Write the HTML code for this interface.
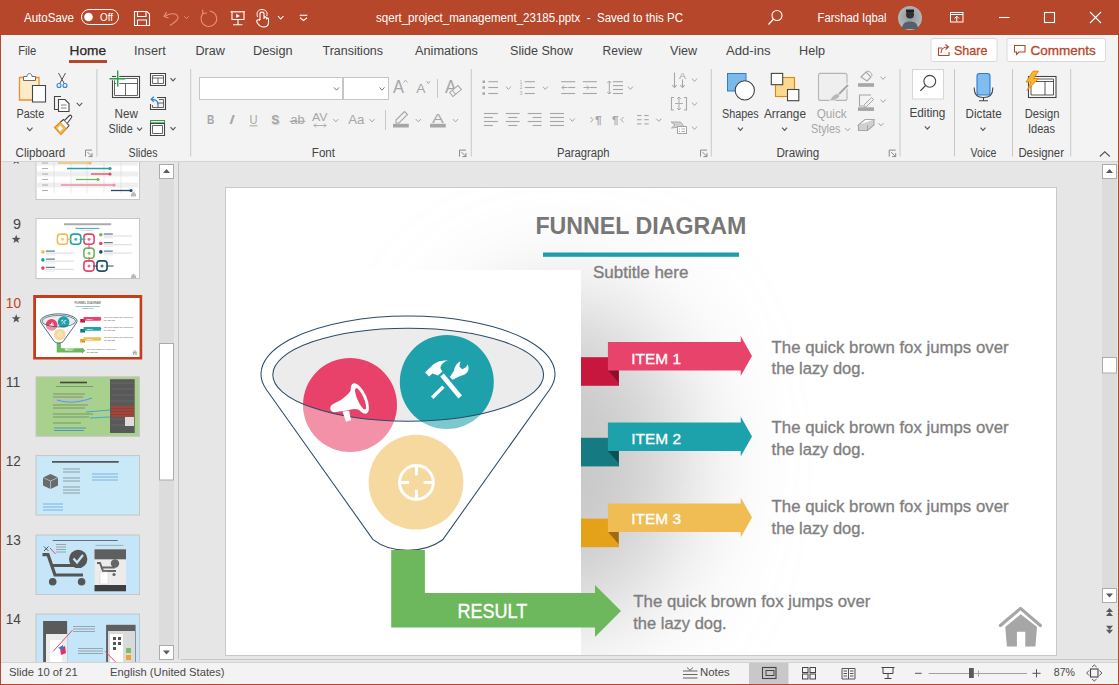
<!DOCTYPE html><html><head><meta charset="utf-8"><style>
html,body{margin:0;padding:0;background:#E6E6E6;overflow:hidden;width:1119px;height:685px;}
svg{display:block;font-family:"Liberation Sans",sans-serif;}
</style></head><body>
<svg width="1119" height="685" viewBox="0 0 1119 685">
<rect x="0" y="0" width="1119" height="685" fill="#E6E6E6" />
<rect x="0" y="0" width="1119" height="35" fill="#B7472A" />
<rect x="1" y="35" width="1117" height="126" fill="#F3F3F3" />
<line x1="1" y1="161.5" x2="1118" y2="161.5" stroke="#D4D4D4" stroke-width="1" />
<rect x="0" y="35" width="1" height="650" fill="#B7472A" />
<rect x="1118" y="35" width="1" height="650" fill="#B7472A" />
<rect x="0" y="684" width="1119" height="1" fill="#B7472A" />
<text x="24.00" y="21.70" font-size="12" fill="#FFFFFF" font-weight="normal" textLength="50.01" lengthAdjust="spacingAndGlyphs" >AutoSave</text>
<rect x="81.5" y="9.5" width="37" height="15" rx="7.5" fill="none" stroke="#fff" stroke-width="1"/>
<circle cx="88.5" cy="17" r="4.3" fill="#fff"/>
<text x="100.00" y="21.00" font-size="11" fill="#FFFFFF" font-weight="normal" textLength="12.97" lengthAdjust="spacingAndGlyphs" >Off</text>
<path d="M134.5,11.5 H147 L149.5,14 V25.5 H134.5 Z" fill="none" stroke="#FFFFFF" stroke-width="1.1" />
<path d="M137.5,11.5 V16.5 H146 V11.5" fill="none" stroke="#FFFFFF" stroke-width="1.1" />
<path d="M137.5,25.5 V20 H146.5 V25.5" fill="none" stroke="#FFFFFF" stroke-width="1.1" />
<path d="M166.5,12 L164,16.5 L168.5,18" fill="none" stroke="#E6907A" stroke-width="1.1" />
<path d="M164.5,16.5 C169,13 177.5,12.5 178,17.5 C178.3,20 174,23 170,25.5" fill="none" stroke="#E6907A" stroke-width="1.1" />
<path d="M184.25,16.3 L186.5,18.7 L188.75,16.3" fill="none" stroke="#E6907A" stroke-width="1" />
<path d="M203.5,13 C199.5,17 200.5,24.5 207,26.2 C213,27.5 217.5,22.5 216.5,17.5 C216,14 213,11.5 209.5,11" fill="none" stroke="#E6907A" stroke-width="1.1" />
<path d="M202.5,9.5 L203,13.5 L207,13" fill="none" stroke="#E6907A" stroke-width="1.1" />
<path d="M230.5,11.8 H245" fill="none" stroke="#FFFFFF" stroke-width="1.2" />
<path d="M232,11.8 V19.5 H244 V11.8" fill="none" stroke="#FFFFFF" stroke-width="1.1" />
<path d="M238,19.5 V24.8 M233,24.8 H242.5" fill="none" stroke="#FFFFFF" stroke-width="1.1" />
<path d="M236.2,13.8 L240,15.9 L236.2,18 Z" fill="#FFFFFF" stroke="none" stroke-width="1" />
<path d="M260,20 V14 C260,11.5 264,11.5 264,14 V19 M264,18 C264,16.5 266.5,16.5 266.5,18 V19.5 M266.5,19 C266.5,17.8 268.5,17.8 268.5,19 V22.5 C268.5,25.5 266.5,27 263.5,27 C260.5,27 258.5,25 257,22.5 L256.8,20.5 C257.5,19.5 259,19.5 260,20.5" fill="none" stroke="#FFFFFF" stroke-width="1.1" />
<path d="M257.5,17 C256,12 258.5,9.5 262,9.5 C265.5,9.5 268,12 266.8,16" fill="none" stroke="#FFFFFF" stroke-width="1" />
<path d="M277.95,16.0 L280.7,19.0 L283.45,16.0" fill="none" stroke="#FFFFFF" stroke-width="1.1" />
<path d="M299.7,15.3 H307.3" fill="none" stroke="#FFFFFF" stroke-width="1.1" />
<path d="M300,17.8 L303.5,20.5 L307,17.8" fill="none" stroke="#FFFFFF" stroke-width="1.1" />
<text x="376.00" y="21.80" font-size="12" fill="#FFFFFF" font-weight="normal" textLength="307.00" lengthAdjust="spacingAndGlyphs" xml:space="preserve">sqert_project_management_23185.pptx  -  Saved to this PC</text>
<circle cx="777" cy="15.5" r="5" fill="none" stroke="#fff" stroke-width="1.1"/>
<path d="M773.5,19 L768.5,24.5" fill="none" stroke="#FFFFFF" stroke-width="1.2" />
<text x="817.60" y="22.40" font-size="12" fill="#FFFFFF" font-weight="normal" textLength="69.00" lengthAdjust="spacingAndGlyphs" >Farshad Iqbal</text>
<defs><radialGradient id="av" cx="50%" cy="45%" r="55%"><stop offset="0" stop-color="#8d969c"/><stop offset="1" stop-color="#b5babd"/></radialGradient></defs>
<circle cx="910" cy="18" r="12" fill="url(#av)"/>
<path d="M902,29 C902.5,22.5 906,21.5 910,21.5 C914,21.5 917.5,22.5 918,29 Z" fill="#55606b" stroke="none" stroke-width="1" />
<circle cx="910" cy="14.5" r="4" fill="#2f2f33"/>
<rect x="906" y="9.5" width="8" height="2.5" fill="#1e1e22" />
<rect x="950.5" y="12.5" width="12.5" height="9.5" fill="none" stroke="#fff" stroke-width="1"/>
<path d="M950.5,14.5 H963 M956.75,21.5 V16.5 M954.5,18.5 L956.75,16.2 L959,18.5" fill="none" stroke="#FFFFFF" stroke-width="1" />
<path d="M999,17.5 H1009.5" fill="none" stroke="#FFFFFF" stroke-width="1.1" />
<rect x="1044.5" y="12.5" width="10" height="10" fill="none" stroke="#fff" stroke-width="1.1"/>
<path d="M1090,12 L1101,23 M1101,12 L1090,23" fill="none" stroke="#FFFFFF" stroke-width="1.1" />
<text x="18.20" y="55.00" font-size="12.5" fill="#444444" font-weight="normal" textLength="18.10" lengthAdjust="spacingAndGlyphs" >File</text>
<text x="134.00" y="55.00" font-size="12.5" fill="#444444" font-weight="normal" textLength="31.80" lengthAdjust="spacingAndGlyphs" >Insert</text>
<text x="195.40" y="55.00" font-size="12.5" fill="#444444" font-weight="normal" textLength="29.37" lengthAdjust="spacingAndGlyphs" >Draw</text>
<text x="253.00" y="55.00" font-size="12.5" fill="#444444" font-weight="normal" textLength="39.50" lengthAdjust="spacingAndGlyphs" >Design</text>
<text x="322.50" y="55.00" font-size="12.5" fill="#444444" font-weight="normal" textLength="60.49" lengthAdjust="spacingAndGlyphs" >Transitions</text>
<text x="415.00" y="55.00" font-size="12.5" fill="#444444" font-weight="normal" textLength="63.00" lengthAdjust="spacingAndGlyphs" >Animations</text>
<text x="510.00" y="55.00" font-size="12.5" fill="#444444" font-weight="normal" textLength="62.96" lengthAdjust="spacingAndGlyphs" >Slide Show</text>
<text x="602.50" y="55.00" font-size="12.5" fill="#444444" font-weight="normal" textLength="39.46" lengthAdjust="spacingAndGlyphs" >Review</text>
<text x="670.00" y="55.00" font-size="12.5" fill="#444444" font-weight="normal" textLength="26.97" lengthAdjust="spacingAndGlyphs" >View</text>
<text x="726.00" y="55.00" font-size="12.5" fill="#444444" font-weight="normal" textLength="44.50" lengthAdjust="spacingAndGlyphs" >Add-ins</text>
<text x="799.00" y="55.00" font-size="12.5" fill="#444444" font-weight="normal" textLength="26.00" lengthAdjust="spacingAndGlyphs" >Help</text>
<text x="69.60" y="55.00" font-size="12.5" fill="#262626" font-weight="normal" textLength="36.39" lengthAdjust="spacingAndGlyphs" stroke="#262626" stroke-width="0.25">Home</text>
<rect x="69" y="60" width="38" height="3" fill="#B7472A" />
<rect x="931" y="38.5" width="66" height="23" rx="2" fill="#fff" stroke="#DADADA" stroke-width="1"/>
<rect x="1007" y="38.5" width="98.5" height="23" rx="2" fill="#fff" stroke="#DADADA" stroke-width="1"/>
<path d="M942,48 H938.5 V55.5 H949 V52" fill="none" stroke="#B7472A" stroke-width="1.1" />
<path d="M941,53 C941,48.5 944,47 948,47 M945.5,44.5 L948.5,47 L945.5,49.5" fill="none" stroke="#B7472A" stroke-width="1.1" />
<text x="954.00" y="54.60" font-size="13" fill="#B7472A" font-weight="normal" textLength="33.41" lengthAdjust="spacingAndGlyphs" stroke="#B7472A" stroke-width="0.3">Share</text>
<path d="M1014.5,45.5 H1025 V52 H1019 L1016.5,54.5 V52 H1014.5 Z" fill="none" stroke="#B7472A" stroke-width="1.1" />
<text x="1030.40" y="54.60" font-size="13" fill="#B7472A" font-weight="normal" textLength="65.29" lengthAdjust="spacingAndGlyphs" stroke="#B7472A" stroke-width="0.3">Comments</text>
<path d="M19.5,77.5 H39 V100 H19.5 Z" fill="#FCEBC8" stroke="#E8922A" stroke-width="1.3" />
<path d="M23.5,80.5 V76.5 H27 C27,72.5 32,72.5 32,76.5 H35.5 V80.5 Z" fill="#fff" stroke="#6b6b6b" stroke-width="1" />
<path d="M32.5,85.5 H45.5 V102 H32.5 Z" fill="#fff" stroke="#444" stroke-width="1.1" />
<text x="16.40" y="117.80" font-size="12" fill="#444444" font-weight="normal" textLength="27.80" lengthAdjust="spacingAndGlyphs" >Paste</text>
<path d="M27.05,127.69999999999999 L29.8,130.7 L32.55,127.69999999999999" fill="none" stroke="#555" stroke-width="1.1" />
<path d="M58.5,73 L64.5,84 M65.5,73 L59.5,84" fill="none" stroke="#555" stroke-width="1" />
<circle cx="59" cy="85.5" r="2" fill="none" stroke="#2B88D8" stroke-width="1.1"/><circle cx="65" cy="85.5" r="2" fill="none" stroke="#2B88D8" stroke-width="1.1"/>
<path d="M58,109.5 H54.5 V96.5 H61" fill="none" stroke="#444" stroke-width="1.1" />
<path d="M58.5,99.5 H65 L69,103.5 V111.5 H58.5 Z" fill="#fff" stroke="#444" stroke-width="1.1" />
<path d="M61,105 H66.5 M61,108 H66.5" fill="none" stroke="#666" stroke-width="0.8" />
<path d="M76.75,102.8 L79.5,105.8 L82.25,102.8" fill="none" stroke="#555" stroke-width="1.1" />
<path d="M54.5,127.5 L60.5,122 L66.5,128.5 L61,134.5 Z" fill="#F6B75A" stroke="#E8820C" stroke-width="1.1" />
<path d="M57.5,128 L60.5,125.5 L63,128.5 L60,131.5 Z" fill="#fff" stroke="none" stroke-width="1" />
<path d="M60.5,122 L63.5,119.5 L69,125.5 L66.5,128.5" fill="#fff" stroke="#444" stroke-width="1.1" />
<path d="M64.5,120.5 L69.5,115.5 C70.5,114.5 72.5,116 71.5,117.5 L67.5,123" fill="#fff" stroke="#444" stroke-width="1.1" />
<text x="15.60" y="157.00" font-size="12" fill="#444444" font-weight="normal" textLength="49.60" lengthAdjust="spacingAndGlyphs" >Clipboard</text>
<path d="M85.5,156.6 V150.1 H92" fill="none" stroke="#8a8a8a" stroke-width="1" />
<path d="M87.5,152.1 L92,156.6 M92,153.1 V156.6 H88.5" fill="none" stroke="#8a8a8a" stroke-width="1" />
<line x1="96.9" y1="69" x2="96.9" y2="156.5" stroke="#C8C8C8" stroke-width="1" />
<rect x="112.5" y="76.5" width="27" height="21" fill="#fff" stroke="#444" stroke-width="1.1"/>
<path d="M114.5,78.5 H137.5 V95.5 H114.5 Z M114.5,83.5 H137.5 M125.5,83.5 V95.5" fill="none" stroke="#555" stroke-width="0.9" />
<path d="M109.5,78.7 H125.5 M117.7,70.5 V86.5" fill="none" stroke="#F3F3F3" stroke-width="3.2" />
<path d="M109.5,78.7 H125.5 M117.7,70.5 V86.5" fill="none" stroke="#2E9D48" stroke-width="1.4" />
<text x="114.60" y="117.80" font-size="12" fill="#444444" font-weight="normal" textLength="23.37" lengthAdjust="spacingAndGlyphs" >New</text>
<text x="108.50" y="133.20" font-size="12" fill="#444444" font-weight="normal" textLength="24.20" lengthAdjust="spacingAndGlyphs" >Slide</text>
<path d="M137.1,127.6 L139.6,130.4 L142.1,127.6" fill="none" stroke="#555" stroke-width="1.1" />
<path d="M150.5,73.5 H165.5 V85.5 H150.5 Z" fill="#fff" stroke="#444" stroke-width="1.1" />
<path d="M152.5,75.5 H163.5 V83.5 H152.5 Z M152.5,78 H163.5 M158,78 V83.5" fill="none" stroke="#444" stroke-width="0.8" />
<path d="M170.5,78.1 L173,80.9 L175.5,78.1" fill="none" stroke="#555" stroke-width="1.1" />
<path d="M157,97.5 H165.5 V109.5 H150.5 V104" fill="none" stroke="#444" stroke-width="1.1" />
<path d="M159,99.5 H163.5 V107.5 H152.5 V105 M158,103 H163.5 M158,103 V107.5" fill="none" stroke="#555" stroke-width="0.9" />
<path d="M157.8,104.5 C158,101 155.5,99.3 151.5,99.3" fill="none" stroke="#2B88D8" stroke-width="1.3" />
<path d="M153.8,96.8 L151.2,99.3 L153.8,101.8" fill="none" stroke="#2B88D8" stroke-width="1.3" />
<rect x="150.5" y="120.5" width="14" height="2.3" fill="#E6F2E6" stroke="#2E9D48" stroke-width="1"/>
<path d="M150.5,123.5 H164.5 V135.5 H150.5 Z" fill="#fff" stroke="#444" stroke-width="1.1" />
<path d="M152.5,125.5 H162.5 V133.5 H152.5 Z" fill="none" stroke="#555" stroke-width="0.9" />
<path d="M170.5,127.1 L173,129.9 L175.5,127.1" fill="none" stroke="#555" stroke-width="1.1" />
<text x="128.60" y="157.00" font-size="12" fill="#444444" font-weight="normal" textLength="28.90" lengthAdjust="spacingAndGlyphs" >Slides</text>
<line x1="190.7" y1="69" x2="190.7" y2="156.5" stroke="#C8C8C8" stroke-width="1" />
<rect x="199.5" y="77.5" width="143" height="22" fill="#fff" stroke="#C6C6C6" stroke-width="1"/>
<rect x="343.5" y="77.5" width="45" height="22" fill="#fff" stroke="#C6C6C6" stroke-width="1"/>
<path d="M334.0,87.39999999999999 L336.5,90.2 L339.0,87.39999999999999" fill="none" stroke="#777" stroke-width="1" />
<path d="M379.5,87.39999999999999 L382,90.2 L384.5,87.39999999999999" fill="none" stroke="#777" stroke-width="1" />
<text x="393.00" y="92.70" font-size="17.5" fill="#A6A6A6" font-weight="normal" textLength="11.00" lengthAdjust="spacingAndGlyphs" >A</text>
<path d="M403.5,82.5 L405.5,80.2 L407.5,82.5" fill="none" stroke="#A6A6A6" stroke-width="0.9" />
<text x="416.30" y="92.70" font-size="13.5" fill="#A6A6A6" font-weight="normal" textLength="9.20" lengthAdjust="spacingAndGlyphs" >A</text>
<path d="M426.5,81 L428.3,83.7 L430.1,81" fill="none" stroke="#A6A6A6" stroke-width="0.9" />
<line x1="437.5" y1="79" x2="437.5" y2="98" stroke="#C8C8C8" stroke-width="1" />
<text x="445.00" y="92.70" font-size="17.5" fill="#A6A6A6" font-weight="normal" textLength="11.50" lengthAdjust="spacingAndGlyphs" >A</text>
<g transform="translate(455.5,91) rotate(-40)"><rect x="-5.5" y="-2.6" width="11" height="5.2" fill="#F3F3F3" stroke="#A6A6A6" stroke-width="1"/><line x1="-2" y1="-2.6" x2="-2" y2="2.6" stroke="#A6A6A6" stroke-width="1"/></g>
<text x="207.00" y="123.80" font-size="12" fill="#A6A6A6" font-weight="bold" textLength="7.30" lengthAdjust="spacingAndGlyphs" >B</text>
<text x="228.80" y="123.80" font-size="12" fill="#A6A6A6" font-weight="normal" textLength="6.20" lengthAdjust="spacingAndGlyphs" font-style="italic">I</text>
<text x="249.50" y="123.80" font-size="12" fill="#A6A6A6" font-weight="normal" textLength="8.00" lengthAdjust="spacingAndGlyphs" >U</text>
<line x1="249.5" y1="125.8" x2="257.5" y2="125.8" stroke="#A6A6A6" stroke-width="1" />
<text x="272.00" y="124.50" font-size="12" fill="#cfcfcf" font-weight="bold" textLength="8.00" lengthAdjust="spacingAndGlyphs" >S</text>
<text x="271.30" y="123.80" font-size="12" fill="#A6A6A6" font-weight="bold" textLength="8.00" lengthAdjust="spacingAndGlyphs" >S</text>
<text x="290.50" y="123.80" font-size="12" fill="#A6A6A6" font-weight="normal" textLength="14.00" lengthAdjust="spacingAndGlyphs" >ab</text>
<line x1="289.5" y1="121.3" x2="305.5" y2="121.3" stroke="#A6A6A6" stroke-width="1" />
<text x="312.00" y="120.50" font-size="11.5" fill="#A6A6A6" font-weight="normal" textLength="15.50" lengthAdjust="spacingAndGlyphs" >AV</text>
<path d="M314,125.5 H326 M316,123.5 L314,125.5 L316,127.5 M324,123.5 L326,125.5 L324,127.5" fill="none" stroke="#A6A6A6" stroke-width="0.9" />
<path d="M333.3,119.1 L335.8,121.9 L338.3,119.1" fill="none" stroke="#A6A6A6" stroke-width="1" />
<text x="348.30" y="123.80" font-size="12" fill="#A6A6A6" font-weight="normal" textLength="16.19" lengthAdjust="spacingAndGlyphs" >Aa</text>
<path d="M369.5,119.1 L372,121.9 L374.5,119.1" fill="none" stroke="#A6A6A6" stroke-width="1" />
<line x1="385.5" y1="110" x2="385.5" y2="130" stroke="#C8C8C8" stroke-width="1" />
<path d="M396,120 L404.5,111.5 L407.5,114.5 L399,123 L396,123 Z" fill="none" stroke="#A6A6A6" stroke-width="1.1" />
<rect x="393" y="123.8" width="15.8" height="3.7" fill="#A6A6A6" />
<path d="M415.8,119.1 L418.3,121.9 L420.8,119.1" fill="none" stroke="#A6A6A6" stroke-width="1" />
<text x="432.00" y="122.50" font-size="13" fill="#A6A6A6" font-weight="normal" textLength="11.80" lengthAdjust="spacingAndGlyphs" >A</text>
<rect x="430" y="123.8" width="15.8" height="3.7" fill="#A6A6A6" />
<path d="M453.0,119.1 L455.5,121.9 L458.0,119.1" fill="none" stroke="#A6A6A6" stroke-width="1" />
<text x="311.80" y="157.00" font-size="12" fill="#444444" font-weight="normal" textLength="23.20" lengthAdjust="spacingAndGlyphs" >Font</text>
<path d="M459.5,156.6 V150.1 H466" fill="none" stroke="#8a8a8a" stroke-width="1" />
<path d="M461.5,152.1 L466,156.6 M466,153.1 V156.6 H462.5" fill="none" stroke="#8a8a8a" stroke-width="1" />
<line x1="471.3" y1="69" x2="471.3" y2="156.5" stroke="#C8C8C8" stroke-width="1" />
<rect x="482.5" y="80.5" width="2.5" height="2.5" fill="#A6A6A6" />
<line x1="488.3" y1="81.7" x2="498" y2="81.7" stroke="#A6A6A6" stroke-width="1.1" />
<rect x="482.5" y="86.3" width="2.5" height="2.5" fill="#A6A6A6" />
<line x1="488.3" y1="87.5" x2="498" y2="87.5" stroke="#A6A6A6" stroke-width="1.1" />
<rect x="482.5" y="92.3" width="2.5" height="2.5" fill="#A6A6A6" />
<line x1="488.3" y1="93.5" x2="498" y2="93.5" stroke="#A6A6A6" stroke-width="1.1" />
<path d="M505.9,86.6 L508.4,89.4 L510.9,86.6" fill="none" stroke="#A6A6A6" stroke-width="1" />
<text x="519.8" y="83.5" font-size="4.5" fill="#A6A6A6">1</text>
<line x1="524.7" y1="81.7" x2="534.8" y2="81.7" stroke="#A6A6A6" stroke-width="1.1" />
<text x="519.8" y="89.3" font-size="4.5" fill="#A6A6A6">2</text>
<line x1="524.7" y1="87.5" x2="534.8" y2="87.5" stroke="#A6A6A6" stroke-width="1.1" />
<text x="519.8" y="95.3" font-size="4.5" fill="#A6A6A6">3</text>
<line x1="524.7" y1="93.5" x2="534.8" y2="93.5" stroke="#A6A6A6" stroke-width="1.1" />
<path d="M542.8,86.6 L545.3,89.4 L547.8,86.6" fill="none" stroke="#A6A6A6" stroke-width="1" />
<line x1="561.2" y1="81.7" x2="575.2" y2="81.7" stroke="#A6A6A6" stroke-width="1.1" />
<line x1="561.2" y1="93.5" x2="575.2" y2="93.5" stroke="#A6A6A6" stroke-width="1.1" />
<line x1="568.2" y1="87.5" x2="575.2" y2="87.5" stroke="#A6A6A6" stroke-width="1.1" />
<line x1="582.8" y1="81.7" x2="596.8" y2="81.7" stroke="#A6A6A6" stroke-width="1.1" />
<line x1="582.8" y1="93.5" x2="596.8" y2="93.5" stroke="#A6A6A6" stroke-width="1.1" />
<line x1="589.8" y1="87.5" x2="596.8" y2="87.5" stroke="#A6A6A6" stroke-width="1.1" />
<path d="M562,87.5 H567.5 M564,85.5 L562,87.5 L564,89.5" fill="none" stroke="#A6A6A6" stroke-width="1" />
<path d="M583.5,87.5 H589 M587,85.5 L589,87.5 L587,89.5" fill="none" stroke="#A6A6A6" stroke-width="1" />
<path d="M609.3,81 V94 M607.3,83 L609.3,81 L611.3,83 M607.3,92 L609.3,94 L611.3,92" fill="none" stroke="#A6A6A6" stroke-width="1" />
<line x1="613" y1="81.7" x2="623" y2="81.7" stroke="#A6A6A6" stroke-width="1.1" />
<line x1="613" y1="85.6" x2="623" y2="85.6" stroke="#A6A6A6" stroke-width="1.1" />
<line x1="613" y1="89.5" x2="623" y2="89.5" stroke="#A6A6A6" stroke-width="1.1" />
<line x1="613" y1="93.5" x2="623" y2="93.5" stroke="#A6A6A6" stroke-width="1.1" />
<path d="M627.9,86.6 L630.4,89.4 L632.9,86.6" fill="none" stroke="#A6A6A6" stroke-width="1" />
<line x1="483.9" y1="113.5" x2="497.9" y2="113.5" stroke="#A6A6A6" stroke-width="1.1" />
<line x1="483.9" y1="117.5" x2="492.9" y2="117.5" stroke="#A6A6A6" stroke-width="1.1" />
<line x1="483.9" y1="121.5" x2="497.9" y2="121.5" stroke="#A6A6A6" stroke-width="1.1" />
<line x1="483.9" y1="125.5" x2="492.9" y2="125.5" stroke="#A6A6A6" stroke-width="1.1" />
<line x1="505.7" y1="113.5" x2="519.7" y2="113.5" stroke="#A6A6A6" stroke-width="1.1" />
<line x1="508.2" y1="117.5" x2="517.2" y2="117.5" stroke="#A6A6A6" stroke-width="1.1" />
<line x1="505.7" y1="121.5" x2="519.7" y2="121.5" stroke="#A6A6A6" stroke-width="1.1" />
<line x1="508.2" y1="125.5" x2="517.2" y2="125.5" stroke="#A6A6A6" stroke-width="1.1" />
<line x1="527.6" y1="113.5" x2="541.6" y2="113.5" stroke="#A6A6A6" stroke-width="1.1" />
<line x1="532.6" y1="117.5" x2="541.6" y2="117.5" stroke="#A6A6A6" stroke-width="1.1" />
<line x1="527.6" y1="121.5" x2="541.6" y2="121.5" stroke="#A6A6A6" stroke-width="1.1" />
<line x1="532.6" y1="125.5" x2="541.6" y2="125.5" stroke="#A6A6A6" stroke-width="1.1" />
<line x1="550" y1="113.5" x2="564" y2="113.5" stroke="#A6A6A6" stroke-width="1.1" />
<line x1="550" y1="117.5" x2="564" y2="117.5" stroke="#A6A6A6" stroke-width="1.1" />
<line x1="550" y1="121.5" x2="564" y2="121.5" stroke="#A6A6A6" stroke-width="1.1" />
<line x1="550" y1="125.5" x2="564" y2="125.5" stroke="#A6A6A6" stroke-width="1.1" />
<path d="M569.8,118.6 L572.3,121.4 L574.8,118.6" fill="none" stroke="#A6A6A6" stroke-width="1" />
<text x="595.00" y="124.00" font-size="11" fill="#A6A6A6" font-weight="bold" textLength="6.80" lengthAdjust="spacingAndGlyphs" >¶</text>
<path d="M590.5,117 L593,119.7 L590.5,122.4" fill="none" stroke="#A6A6A6" stroke-width="1" />
<text x="611.90" y="124.00" font-size="11" fill="#A6A6A6" font-weight="bold" textLength="6.60" lengthAdjust="spacingAndGlyphs" >¶</text>
<path d="M623.5,117 L621,119.7 L623.5,122.4" fill="none" stroke="#A6A6A6" stroke-width="1" />
<line x1="637.1" y1="115.5" x2="641.5" y2="115.5" stroke="#A6A6A6" stroke-width="1.1" />
<line x1="644.3" y1="115.5" x2="648.7" y2="115.5" stroke="#A6A6A6" stroke-width="1.1" />
<line x1="637.1" y1="119.7" x2="641.5" y2="119.7" stroke="#A6A6A6" stroke-width="1.1" />
<line x1="644.3" y1="119.7" x2="648.7" y2="119.7" stroke="#A6A6A6" stroke-width="1.1" />
<line x1="637.1" y1="123.9" x2="641.5" y2="123.9" stroke="#A6A6A6" stroke-width="1.1" />
<line x1="644.3" y1="123.9" x2="648.7" y2="123.9" stroke="#A6A6A6" stroke-width="1.1" />
<path d="M656.3,118.6 L658.8,121.4 L661.3,118.6" fill="none" stroke="#A6A6A6" stroke-width="1" />
<path d="M674.5,72.5 V87.5 M672.3,85 L674.5,87.5 L676.7,85" fill="none" stroke="#A6A6A6" stroke-width="1.1" />
<path d="M682.5,79.5 V87.5 M680.3,85 L682.5,87.5 L684.7,85" fill="none" stroke="#A6A6A6" stroke-width="1.1" />
<text x="679.00" y="78.50" font-size="9" fill="#A6A6A6" font-weight="normal" textLength="7.00" lengthAdjust="spacingAndGlyphs" >A</text>
<path d="M692.0,78.6 L694.5,81.4 L697.0,78.6" fill="none" stroke="#A6A6A6" stroke-width="1" />
<path d="M674,97.5 H671.5 V110 H674 M684,97.5 H686.5 V110 H684" fill="none" stroke="#A6A6A6" stroke-width="1.1" />
<path d="M679,97 V110 M677,99 L679,97 L681,99 M677,108 L679,110 L681,108 M675,103.5 H683" fill="none" stroke="#A6A6A6" stroke-width="0.9" />
<path d="M692.0,102.6 L694.5,105.4 L697.0,102.6" fill="none" stroke="#A6A6A6" stroke-width="1" />
<path d="M671,122 H680.5 L685,127.5 H676 L671.5,128 L675,125 Z" fill="#CFCFCF" stroke="#A6A6A6" stroke-width="0.9" />
<rect x="677.5" y="126.5" width="9" height="7" fill="#fff" stroke="#A6A6A6" stroke-width="1"/>
<line x1="679" y1="129" x2="680" y2="129" stroke="#A6A6A6" stroke-width="0.9" />
<line x1="681.5" y1="129" x2="685" y2="129" stroke="#A6A6A6" stroke-width="0.9" />
<line x1="679" y1="131.5" x2="680" y2="131.5" stroke="#A6A6A6" stroke-width="0.9" />
<line x1="681.5" y1="131.5" x2="685" y2="131.5" stroke="#A6A6A6" stroke-width="0.9" />
<path d="M692.0,126.6 L694.5,129.4 L697.0,126.6" fill="none" stroke="#A6A6A6" stroke-width="1" />
<text x="557.00" y="157.00" font-size="12" fill="#444444" font-weight="normal" textLength="52.60" lengthAdjust="spacingAndGlyphs" >Paragraph</text>
<path d="M700.5,156.6 V150.1 H707" fill="none" stroke="#8a8a8a" stroke-width="1" />
<path d="M702.5,152.1 L707,156.6 M707,153.1 V156.6 H703.5" fill="none" stroke="#8a8a8a" stroke-width="1" />
<line x1="711.3" y1="69" x2="711.3" y2="156.5" stroke="#C8C8C8" stroke-width="1" />
<rect x="727.5" y="73.5" width="18.5" height="17.5" fill="#7CB9EA" stroke="#2B7CD3" stroke-width="1"/>
<circle cx="744.8" cy="90.4" r="9.6" fill="#fff" stroke="#444" stroke-width="1.1"/>
<text x="722.00" y="118.00" font-size="12" fill="#444444" font-weight="normal" textLength="36.60" lengthAdjust="spacingAndGlyphs" >Shapes</text>
<path d="M737.9,127.6 L740.4,130.4 L742.9,127.6" fill="none" stroke="#555" stroke-width="1.1" />
<rect x="775.5" y="77.5" width="19" height="19" fill="#F9D98F" stroke="#E8820C" stroke-width="1.1"/>
<rect x="771.3" y="73.4" width="11.4" height="11.3" fill="#fff" stroke="#444" stroke-width="1.1"/>
<rect x="787.5" y="89.5" width="11.3" height="11.2" fill="#fff" stroke="#444" stroke-width="1.1"/>
<text x="764.00" y="118.00" font-size="12" fill="#444444" font-weight="normal" textLength="42.00" lengthAdjust="spacingAndGlyphs" >Arrange</text>
<path d="M782.1,127.6 L784.6,130.4 L787.1,127.6" fill="none" stroke="#555" stroke-width="1.1" />
<rect x="818.5" y="73.4" width="28.5" height="27" rx="2" fill="#EFEFEF" stroke="#B4B4B4" stroke-width="1.1"/>
<path d="M848.5,84.5 L838,95" fill="none" stroke="#F3F3F3" stroke-width="4.5" />
<path d="M848,85 L838.5,94.5" fill="none" stroke="#A8A8A8" stroke-width="2.2" />
<path d="M838.5,93.5 C835,93.5 832,95.5 829.5,101 C834,101 838,99.5 840,96 Z" fill="#B8B8B8" stroke="#F3F3F3" stroke-width="0.8" />
<text x="816.70" y="118.00" font-size="12" fill="#A6A6A6" font-weight="normal" textLength="29.98" lengthAdjust="spacingAndGlyphs" >Quick</text>
<text x="811.00" y="133.30" font-size="12" fill="#A6A6A6" font-weight="normal" textLength="29.40" lengthAdjust="spacingAndGlyphs" >Styles</text>
<path d="M845.1,128.1 L847.6,130.9 L850.1,128.1" fill="none" stroke="#A6A6A6" stroke-width="1" />
<path d="M861,77 L866,72 L871,77 L867,81 Z" fill="none" stroke="#A6A6A6" stroke-width="1.1" />
<path d="M866,72 C868,70 872,72 872,76" fill="none" stroke="#A6A6A6" stroke-width="1" />
<rect x="858" y="83.2" width="16" height="3.6" fill="#A6A6A6" />
<path d="M880.5,76.6 L883,79.4 L885.5,76.6" fill="none" stroke="#A6A6A6" stroke-width="1" />
<path d="M871,95 H859.5 V106 H863" fill="none" stroke="#A6A6A6" stroke-width="1.1" />
<path d="M864,105 L871.5,97.5 L873.5,99.5 L866,107 L864,107 Z" fill="none" stroke="#A6A6A6" stroke-width="1" />
<rect x="858" y="107.3" width="16" height="3.6" fill="#A6A6A6" />
<path d="M880.5,99.6 L883,102.4 L885.5,99.6" fill="none" stroke="#A6A6A6" stroke-width="1" />
<path d="M858.5,125 L865,119.5 H874 L867.5,125 Z" fill="#fff" stroke="#A6A6A6" stroke-width="1.1" />
<path d="M858.5,125 V130.5 H867.5 L874,125 V119.5 M867.5,125 V130.5" fill="#D0D0D0" stroke="#A6A6A6" stroke-width="1.1" />
<path d="M878.5,123.1 L881,125.9 L883.5,123.1" fill="none" stroke="#A6A6A6" stroke-width="1" />
<text x="776.40" y="157.00" font-size="12" fill="#444444" font-weight="normal" textLength="42.90" lengthAdjust="spacingAndGlyphs" >Drawing</text>
<path d="M889.2,156.6 V150.1 H895.7" fill="none" stroke="#8a8a8a" stroke-width="1" />
<path d="M891.2,152.1 L895.7,156.6 M895.7,153.1 V156.6 H892.2" fill="none" stroke="#8a8a8a" stroke-width="1" />
<line x1="900.0" y1="69" x2="900.0" y2="156.5" stroke="#C8C8C8" stroke-width="1" />
<rect x="912.5" y="69.5" width="31" height="29.5" fill="#fff" stroke="#D6D6D6" stroke-width="1"/>
<circle cx="929.8" cy="81.3" r="5.9" fill="none" stroke="#444" stroke-width="1.1"/>
<path d="M925.6,85.5 L920.3,90.8" fill="none" stroke="#444" stroke-width="1.2" />
<text x="909.40" y="117.00" font-size="12" fill="#444444" font-weight="normal" textLength="36.00" lengthAdjust="spacingAndGlyphs" >Editing</text>
<path d="M924.9,126.39999999999999 L927.4,129.2 L929.9,126.39999999999999" fill="none" stroke="#555" stroke-width="1.1" />
<line x1="954.5" y1="69" x2="954.5" y2="156.5" stroke="#C8C8C8" stroke-width="1" />
<rect x="977" y="73.5" width="13" height="21.5" rx="2.5" fill="#7FBDEF" stroke="#2B7CD3" stroke-width="1.1"/>
<path d="M974.3,87.5 V89 C974.3,94.5 978,97.5 983.5,97.5 C989,97.5 992.7,94.5 992.7,89 V87.5" fill="none" stroke="#444" stroke-width="1.1" />
<path d="M983.5,97.5 V100.5 M979,100.8 H988" fill="none" stroke="#444" stroke-width="1.1" />
<text x="965.60" y="117.70" font-size="12" fill="#444444" font-weight="normal" textLength="36.20" lengthAdjust="spacingAndGlyphs" >Dictate</text>
<path d="M980.5,127.6 L983,130.4 L985.5,127.6" fill="none" stroke="#555" stroke-width="1.1" />
<text x="970.50" y="157.00" font-size="12" fill="#444444" font-weight="normal" textLength="25.80" lengthAdjust="spacingAndGlyphs" >Voice</text>
<line x1="1012.5" y1="69" x2="1012.5" y2="156.5" stroke="#C8C8C8" stroke-width="1" />
<rect x="1028.5" y="76.5" width="27.5" height="21" fill="#fff" stroke="#444" stroke-width="1.1"/>
<path d="M1031,79 H1053.5 V95 H1031 Z M1045,81.5 V95 M1031,81.5 H1053.5" fill="none" stroke="#444" stroke-width="0.9" />
<path d="M1033,71.2 L1026,82 H1031 L1027,90.5 L1038.5,78.5 H1033.5 L1038.5,71.2 Z" fill="#F7B731" stroke="#E8820C" stroke-width="0.9" />
<text x="1024.70" y="117.70" font-size="12" fill="#444444" font-weight="normal" textLength="34.80" lengthAdjust="spacingAndGlyphs" >Design</text>
<text x="1028.00" y="133.40" font-size="12" fill="#444444" font-weight="normal" textLength="27.00" lengthAdjust="spacingAndGlyphs" >Ideas</text>
<text x="1018.40" y="157.00" font-size="12" fill="#444444" font-weight="normal" textLength="45.60" lengthAdjust="spacingAndGlyphs" >Designer</text>
<line x1="1070.7" y1="69" x2="1070.7" y2="156.5" stroke="#C8C8C8" stroke-width="1" />
<path d="M1099.8,156.5 L1104.8,151.8 L1109.8,156.5" fill="none" stroke="#555" stroke-width="1.1" />
<rect x="1" y="662" width="1117" height="22" fill="#F3F3F3" />
<line x1="181" y1="659.5" x2="1118" y2="659.5" stroke="#C8C8C8" stroke-width="1" />
<line x1="1" y1="662.5" x2="1118" y2="662.5" stroke="#D2D2D2" stroke-width="1" />
<line x1="178.5" y1="162" x2="178.5" y2="659" stroke="#C2C2C2" stroke-width="1" />
<rect x="159" y="164" width="15" height="482" fill="#DCDCDC" />
<rect x="159.5" y="164.5" width="14" height="14" fill="#fff" stroke="#ABABAB" stroke-width="1"/>
<path d="M163,173 L166.5,169 L170,173 Z" fill="#5a5a5a" stroke="none" stroke-width="1" />
<rect x="159.5" y="343.5" width="14" height="136.5" fill="#fff" stroke="#ABABAB" stroke-width="1"/>
<rect x="159.5" y="645.5" width="14" height="14" fill="#fff" stroke="#ABABAB" stroke-width="1"/>
<path d="M163,650.5 L166.5,654.5 L170,650.5 Z" fill="#5a5a5a" stroke="none" stroke-width="1" />
<rect x="1102" y="164" width="15" height="425" fill="#DCDCDC" />
<rect x="1102.5" y="164.5" width="14" height="14" fill="#fff" stroke="#ABABAB" stroke-width="1"/>
<path d="M1106,173 L1109.5,169 L1113,173 Z" fill="#5a5a5a" stroke="none" stroke-width="1" />
<rect x="1102.5" y="357.5" width="14" height="15.5" fill="#fff" stroke="#ABABAB" stroke-width="1"/>
<rect x="1102.5" y="588.5" width="14" height="14" fill="#fff" stroke="#ABABAB" stroke-width="1"/>
<path d="M1106,593.5 L1109.5,597.5 L1113,593.5 Z" fill="#5a5a5a" stroke="none" stroke-width="1" />
<path d="M1106,612 L1109.5,608 L1113,612 Z M1106,616 L1109.5,612 L1113,616 Z" fill="#5a5a5a" stroke="none" stroke-width="1" />
<path d="M1106,625.8 L1109.5,629.8 L1113,625.8 Z M1106,629.8 L1109.5,633.8 L1113,629.8 Z" fill="#5a5a5a" stroke="none" stroke-width="1" />
<defs>
<radialGradient id="shd" gradientUnits="userSpaceOnUse" cx="585" cy="470" r="200" gradientTransform="translate(585,470) scale(0.95,1.35) translate(-585,-470)"><stop offset="0" stop-color="#D2D2D2"/><stop offset="0.4" stop-color="#DADADA"/><stop offset="0.75" stop-color="#F0F0F0"/><stop offset="1" stop-color="#FFFFFF"/></radialGradient>
<filter id="blurf" x="-100%" y="-100%" width="300%" height="300%"><feGaussianBlur stdDeviation="55"/></filter>
<clipPath id="slideclip"><rect x="226" y="188" width="830" height="467"/></clipPath>
<clipPath id="inner"><ellipse cx="408.2" cy="374.7" rx="135.4" ry="46.5"/></clipPath>
</defs>
<rect x="225.5" y="187.5" width="831" height="468" fill="none" stroke="#C9C9C9" stroke-width="1"/>
<rect x="226" y="188" width="830" height="467" fill="#fff" />
<g clip-path="url(#slideclip)"><ellipse cx="565" cy="462" rx="120" ry="165" fill="#C8C8C8" filter="url(#blurf)"/></g>
<g>
<g clip-path="url(#slideclip)">
<rect x="226" y="270" width="355" height="385" fill="#fff" />
<text x="535.40" y="234.40" font-size="24.7" fill="#777777" font-weight="bold" textLength="210.91" lengthAdjust="spacingAndGlyphs" >FUNNEL DIAGRAM</text>
<rect x="543" y="252.5" width="196" height="4.3" fill="#1E9EA8" />
<text x="593.00" y="278.00" font-size="16" fill="#7F7F7F" font-weight="normal" textLength="95.40" lengthAdjust="spacingAndGlyphs" stroke="#7F7F7F" stroke-width="0.35">Subtitle here</text>
<ellipse cx="408.2" cy="374.7" rx="135.4" ry="46.5" fill="#ECECEC"/>
<circle cx="350" cy="405" r="47" fill="#E8426A"/>
<circle cx="446.8" cy="382" r="47" fill="#1EA1AB"/>
<circle cx="416" cy="482.2" r="47.4" fill="#F0BE58"/>
<path d="M266.5,389.7 A147,58 0 1 1 549.5,389.7 L442.7,539.8 C432,547.5 420,550.3 408,550.3 C396,550.3 383,547.5 372.8,539.3 Z M272.8,374.7 A135.4,46.5 0 1 0 543.6,374.7 A135.4,46.5 0 1 0 272.8,374.7 Z" fill="#fff" fill-opacity="0.42" fill-rule="evenodd"/>
<path d="M266.5,389.7 A147,58 0 1 1 549.5,389.7 L442.7,539.8 C432,547.5 420,550.3 408,550.3 C396,550.3 383,547.5 372.8,539.3 Z" fill="none" stroke="#2B4B66" stroke-width="1.05"/>
<ellipse cx="408.2" cy="374.7" rx="135.4" ry="46.5" fill="none" stroke="#2B4B66" stroke-width="1.05"/>
<g fill="#fff">
<path d="M353.5,385 C350.5,394 342,400 334,403.5 C329,405.5 329,411.5 334,412.2 L347,410.6 C351,409 355,408.6 359,409.8 L363,412 Z"/>
<path d="M342.5,411.6 L349.2,410.8 L351,420.2 L346,421.8 Z"/>
<ellipse cx="0" cy="0" rx="6.8" ry="16.5" transform="translate(359.8,398.5) rotate(-23.8)"/>
<ellipse cx="0" cy="0" rx="3.2" ry="11.6" fill="#E8426A" transform="translate(360.6,398.8) rotate(-23.8)"/>
</g>
<g fill="#fff">
<path d="M431,396.6 L433.4,399 L444.6,387.8 L442.2,385.4 Z"/>
<path d="M449.9,376.9 L453.9,370.7 C454.5,366 457,363 460.5,361.2 L459.4,366.7 L462.3,369.2 L465.6,367.4 L467.8,364.5 C469.5,369 468,372 466,373.5 C464,375 462.5,375.5 460.8,375.8 L452.5,379.8 Z"/>
<path d="M440.2,376.4 L443.8,373.4 L462,395.6 L458.4,398.6 Z"/>
<path d="M425.1,372.5 L428,369.5 L431,366.7 C435,362 441,360 448.1,360.5 C444,361.5 441,364.5 440.3,368 L442.4,371.4 L438,375.4 L432.5,373.5 L429.1,376.5 Z"/>
</g>
<g><circle cx="416.4" cy="482.4" r="16.9" fill="none" stroke="#fff" stroke-width="3"/><path d="M416.4,466 V475.6 M416.4,489.8 V499 M400,482.4 H409 M423.6,482.4 H433" stroke="#fff" stroke-width="3"/></g>
<path d="M391.2,550 H424.9 V593 H595 V585 L621,611 L595,637 V627.6 H391.2 Z" fill="#6DB85C"/>
<text x="457.60" y="618.00" font-size="21" fill="#FFFFFF" font-weight="normal" textLength="69.70" lengthAdjust="spacingAndGlyphs" stroke="#fff" stroke-width="0.4">RESULT</text>
<rect x="581" y="357.2" width="38" height="28.6" fill="#C8173F" />
<path d="M607.9,370.3 H618.6 V382.5 Z" fill="#8C0F2A"/>
<path d="M607.9,342 H740.7 V336 L752,356 L740.7,376 V370.5 H607.9 Z" fill="#E8436A"/>
<text x="631.30" y="364.00" font-size="15.5" fill="#FFFFFF" font-weight="normal" textLength="49.69" lengthAdjust="spacingAndGlyphs" stroke="#fff" stroke-width="0.35">ITEM 1</text>
<text x="771.60" y="352.50" font-size="17.4" fill="#7F7F7F" font-weight="normal" textLength="237.00" lengthAdjust="spacingAndGlyphs" stroke="#7F7F7F" stroke-width="0.35">The quick brown fox jumps over</text>
<text x="771.60" y="374.10" font-size="17.4" fill="#7F7F7F" font-weight="normal" textLength="93.41" lengthAdjust="spacingAndGlyphs" stroke="#7F7F7F" stroke-width="0.35">the lazy dog.</text>
<rect x="581" y="437.8" width="38" height="28.6" fill="#157A82" />
<path d="M607.9,450.90000000000003 H618.6 V463.1 Z" fill="#0E4E55"/>
<path d="M607.9,422.6 H740.7 V416.6 L752,436.6 L740.7,456.6 V451.1 H607.9 Z" fill="#1DA1AB"/>
<text x="631.30" y="444.30" font-size="15.5" fill="#FFFFFF" font-weight="normal" textLength="49.69" lengthAdjust="spacingAndGlyphs" stroke="#fff" stroke-width="0.35">ITEM 2</text>
<text x="771.60" y="432.90" font-size="17.4" fill="#7F7F7F" font-weight="normal" textLength="237.00" lengthAdjust="spacingAndGlyphs" stroke="#7F7F7F" stroke-width="0.35">The quick brown fox jumps over</text>
<text x="771.60" y="454.80" font-size="17.4" fill="#7F7F7F" font-weight="normal" textLength="93.41" lengthAdjust="spacingAndGlyphs" stroke="#7F7F7F" stroke-width="0.35">the lazy dog.</text>
<rect x="581" y="518.6" width="38" height="28.6" fill="#E3A21A" />
<path d="M607.9,531.6999999999999 H618.6 V543.9 Z" fill="#9E6B10"/>
<path d="M607.9,503.4 H740.7 V497.4 L752,517.4 L740.7,537.4 V531.9 H607.9 Z" fill="#F0BD55"/>
<text x="631.30" y="523.70" font-size="15.5" fill="#FFFFFF" font-weight="normal" textLength="49.69" lengthAdjust="spacingAndGlyphs" stroke="#fff" stroke-width="0.35">ITEM 3</text>
<text x="771.60" y="511.50" font-size="17.4" fill="#7F7F7F" font-weight="normal" textLength="237.00" lengthAdjust="spacingAndGlyphs" stroke="#7F7F7F" stroke-width="0.35">The quick brown fox jumps over</text>
<text x="771.60" y="533.70" font-size="17.4" fill="#7F7F7F" font-weight="normal" textLength="93.41" lengthAdjust="spacingAndGlyphs" stroke="#7F7F7F" stroke-width="0.35">the lazy dog.</text>
<text x="633.30" y="607.30" font-size="17.4" fill="#7F7F7F" font-weight="normal" textLength="237.10" lengthAdjust="spacingAndGlyphs" stroke="#7F7F7F" stroke-width="0.35">The quick brown fox jumps over</text>
<text x="633.30" y="628.80" font-size="17.4" fill="#7F7F7F" font-weight="normal" textLength="93.41" lengthAdjust="spacingAndGlyphs" stroke="#7F7F7F" stroke-width="0.35">the lazy dog.</text>
<path d="M1000.4,625.5 L1020.5,608.4 L1040.4,625.5" fill="none" stroke="#A6A6A6" stroke-width="3.2" stroke-linecap="round" stroke-linejoin="round"/>
<path d="M1005.3,626.9 L1020.8,614.3 L1037,626.9 L1035.4,646.6 H1025.3 V631.7 H1016.9 V646.6 H1006.9 Z" fill="#A6A6A6"/>
</g></g>
<clipPath id="panel"><rect x="1" y="162" width="157" height="500"/></clipPath>
<g clip-path="url(#panel)">
<rect x="36.0" y="140.5" width="103.5" height="59" fill="#fff" stroke="#C6C6C6" stroke-width="1"/>
<rect x="37" y="160.5" width="101" height="5" fill="#EFEFEF" />
<rect x="37" y="171.5" width="101" height="5" fill="#EFEFEF" />
<rect x="37" y="182.5" width="101" height="5" fill="#EFEFEF" />
<line x1="54" y1="160" x2="54" y2="193" stroke="#D8D8D8" stroke-width="0.6" />
<line x1="71" y1="160" x2="71" y2="193" stroke="#D8D8D8" stroke-width="0.6" />
<line x1="87" y1="160" x2="87" y2="193" stroke="#D8D8D8" stroke-width="0.6" />
<line x1="104" y1="160" x2="104" y2="193" stroke="#D8D8D8" stroke-width="0.6" />
<line x1="121" y1="160" x2="121" y2="193" stroke="#D8D8D8" stroke-width="0.6" />
<line x1="58" y1="163" x2="90" y2="163" stroke="#F0BD55" stroke-width="1.3" />
<circle cx="90" cy="163" r="1.6" fill="#F0BD55"/>
<line x1="67" y1="168.5" x2="110" y2="168.5" stroke="#1DA1AB" stroke-width="1.3" />
<circle cx="110" cy="168.5" r="1.6" fill="#1DA1AB"/>
<line x1="91" y1="174" x2="110" y2="174" stroke="#E8436A" stroke-width="1.3" />
<circle cx="110" cy="174" r="1.6" fill="#E8436A"/>
<line x1="76" y1="179.5" x2="98" y2="179.5" stroke="#6DB85C" stroke-width="1.3" />
<circle cx="98" cy="179.5" r="1.6" fill="#6DB85C"/>
<line x1="61" y1="185" x2="114" y2="185" stroke="#F08CA4" stroke-width="1.3" />
<circle cx="114" cy="185" r="1.6" fill="#F08CA4"/>
<line x1="111" y1="190.5" x2="131" y2="190.5" stroke="#1F4E6B" stroke-width="1.3" />
<circle cx="131" cy="190.5" r="1.6" fill="#1F4E6B"/>
<line x1="42" y1="163" x2="48" y2="163" stroke="#9a9a9a" stroke-width="0.8" />
<line x1="42" y1="168.5" x2="48" y2="168.5" stroke="#9a9a9a" stroke-width="0.8" />
<line x1="42" y1="174" x2="48" y2="174" stroke="#9a9a9a" stroke-width="0.8" />
<line x1="42" y1="179.5" x2="48" y2="179.5" stroke="#9a9a9a" stroke-width="0.8" />
<line x1="42" y1="185" x2="48" y2="185" stroke="#9a9a9a" stroke-width="0.8" />
<line x1="42" y1="190.5" x2="48" y2="190.5" stroke="#9a9a9a" stroke-width="0.8" />
<path d="M131,194 L133.5,191.5 L136,194 V196.5 H131 Z" fill="#BBBBBB" stroke="none" stroke-width="1" />
<polygon points="16.20,155.70 17.34,158.74 20.57,158.88 18.04,160.90 18.90,164.02 16.20,162.23 13.50,164.02 14.36,160.90 11.83,158.88 15.06,158.74" fill="#555"/>
<text x="12.90" y="229.30" font-size="15" fill="#444444" font-weight="normal" textLength="8.00" lengthAdjust="spacingAndGlyphs" >9</text>
<polygon points="16.20,234.70 17.34,237.74 20.57,237.88 18.04,239.90 18.90,243.02 16.20,241.23 13.50,243.02 14.36,239.90 11.83,237.88 15.06,237.74" fill="#555"/>
<rect x="36.0" y="218.5" width="103.5" height="60" fill="#fff" stroke="#C6C6C6" stroke-width="1"/>
<line x1="64" y1="224.3" x2="111.2" y2="224.3" stroke="#ABABAB" stroke-width="1.9" />
<line x1="75.5" y1="228.4" x2="99.4" y2="228.4" stroke="#1DA1AB" stroke-width="0.9" />
<line x1="81.3" y1="230.4" x2="93.4" y2="230.4" stroke="#bbb" stroke-width="0.6" />
<rect x="57.4" y="234.1" width="10.2" height="10.2" rx="3" fill="none" stroke="#F0BD55" stroke-width="1.6"/>
<circle cx="62.5" cy="239.2" r="1.5" fill="#F0BD55" opacity="0.8"/>
<rect x="70.60000000000001" y="234.1" width="10.2" height="10.2" rx="3" fill="none" stroke="#1DA1AB" stroke-width="1.6"/>
<circle cx="75.7" cy="239.2" r="1.5" fill="#1DA1AB" opacity="0.8"/>
<rect x="83.9" y="234.1" width="10.2" height="10.2" rx="3" fill="none" stroke="#E8436A" stroke-width="1.6"/>
<circle cx="89" cy="239.2" r="1.5" fill="#E8436A" opacity="0.8"/>
<rect x="83.9" y="248.1" width="10.2" height="10.2" rx="3" fill="none" stroke="#6DB85C" stroke-width="1.6"/>
<circle cx="89" cy="253.2" r="1.5" fill="#6DB85C" opacity="0.8"/>
<rect x="83.9" y="260.9" width="10.2" height="10.2" rx="3" fill="none" stroke="#E8436A" stroke-width="1.6"/>
<circle cx="89" cy="266" r="1.5" fill="#E8436A" opacity="0.8"/>
<rect x="96.9" y="260.9" width="10.2" height="10.2" rx="3" fill="none" stroke="#1F4E6B" stroke-width="1.6"/>
<circle cx="102" cy="266" r="1.5" fill="#1F4E6B" opacity="0.8"/>
<path d="M66.5,239.2 H72 M79.7,239.2 H85" fill="none" stroke="#F0BD55" stroke-width="1" />
<path d="M79.7,239.2 H85.5" fill="none" stroke="#1DA1AB" stroke-width="1" />
<path d="M89,243.5 V249 M89,257.3 V262" fill="none" stroke="#E8436A" stroke-width="1" />
<path d="M93,266 H98 M106,266 H113.5" fill="none" stroke="#1F4E6B" stroke-width="1" />
<circle cx="100.8" cy="234.8" r="1.8" fill="#6DB85C"/>
<line x1="103.8" y1="234.0" x2="112.8" y2="234.0" stroke="#1F4E6B" stroke-width="0.9" />
<line x1="103.8" y1="236.0" x2="131.8" y2="236.0" stroke="#C8C8C8" stroke-width="0.7" />
<line x1="103.8" y1="237.8" x2="112.8" y2="237.8" stroke="#D8D8D8" stroke-width="0.6" />
<circle cx="100.8" cy="243.5" r="1.8" fill="#E8436A"/>
<line x1="103.8" y1="242.7" x2="112.8" y2="242.7" stroke="#1F4E6B" stroke-width="0.9" />
<line x1="103.8" y1="244.7" x2="131.8" y2="244.7" stroke="#C8C8C8" stroke-width="0.7" />
<line x1="103.8" y1="246.5" x2="112.8" y2="246.5" stroke="#D8D8D8" stroke-width="0.6" />
<circle cx="100.8" cy="251.9" r="1.8" fill="#1F4E6B"/>
<line x1="103.8" y1="251.1" x2="112.8" y2="251.1" stroke="#1F4E6B" stroke-width="0.9" />
<line x1="103.8" y1="253.1" x2="131.8" y2="253.1" stroke="#C8C8C8" stroke-width="0.7" />
<line x1="103.8" y1="254.9" x2="112.8" y2="254.9" stroke="#D8D8D8" stroke-width="0.6" />
<circle cx="42.9" cy="251.9" r="1.8" fill="#F0BD55"/>
<line x1="45.9" y1="251.1" x2="54.9" y2="251.1" stroke="#1F4E6B" stroke-width="0.9" />
<line x1="45.9" y1="253.1" x2="73.9" y2="253.1" stroke="#C8C8C8" stroke-width="0.7" />
<line x1="45.9" y1="254.9" x2="54.9" y2="254.9" stroke="#D8D8D8" stroke-width="0.6" />
<circle cx="42.9" cy="259.9" r="1.8" fill="#1DA1AB"/>
<line x1="45.9" y1="259.09999999999997" x2="54.9" y2="259.09999999999997" stroke="#1F4E6B" stroke-width="0.9" />
<line x1="45.9" y1="261.09999999999997" x2="73.9" y2="261.09999999999997" stroke="#C8C8C8" stroke-width="0.7" />
<line x1="45.9" y1="262.9" x2="54.9" y2="262.9" stroke="#D8D8D8" stroke-width="0.6" />
<circle cx="42.9" cy="268.1" r="1.8" fill="#E8436A"/>
<line x1="45.9" y1="267.3" x2="54.9" y2="267.3" stroke="#1F4E6B" stroke-width="0.9" />
<line x1="45.9" y1="269.3" x2="73.9" y2="269.3" stroke="#C8C8C8" stroke-width="0.7" />
<line x1="45.9" y1="271.1" x2="54.9" y2="271.1" stroke="#D8D8D8" stroke-width="0.6" />
<path d="M131,276 L133.5,273.5 L136,276 V278.5 H131 Z" fill="#BBBBBB" stroke="none" stroke-width="1" />
<text x="5.80" y="307.60" font-size="15" fill="#C43E1C" font-weight="normal" textLength="15.20" lengthAdjust="spacingAndGlyphs" >10</text>
<polygon points="16.20,314.10 17.34,317.14 20.57,317.28 18.04,319.30 18.90,322.42 16.20,320.63 13.50,322.42 14.36,319.30 11.83,317.28 15.06,317.14" fill="#555"/>
<rect x="34.7" y="296.5" width="106" height="61.5" fill="none" stroke="#C43E1C" stroke-width="3"/>
<rect x="36" y="298" width="103.5" height="59" fill="#fff" />
<g transform="translate(36.2,298) scale(0.12410) translate(-226,-188)">
<g>
<g clip-path="url(#slideclip)">
<rect x="226" y="270" width="355" height="385" fill="#fff" />
<text x="535.40" y="234.40" font-size="24.7" fill="#777777" font-weight="bold" textLength="210.91" lengthAdjust="spacingAndGlyphs" >FUNNEL DIAGRAM</text>
<rect x="543" y="252.5" width="196" height="4.3" fill="#1E9EA8" />
<text x="593.00" y="278.00" font-size="16" fill="#7F7F7F" font-weight="normal" textLength="95.40" lengthAdjust="spacingAndGlyphs" stroke="#7F7F7F" stroke-width="0.35">Subtitle here</text>
<ellipse cx="408.2" cy="374.7" rx="135.4" ry="46.5" fill="#ECECEC"/>
<circle cx="350" cy="405" r="47" fill="#E8426A"/>
<circle cx="446.8" cy="382" r="47" fill="#1EA1AB"/>
<circle cx="416" cy="482.2" r="47.4" fill="#F0BE58"/>
<path d="M266.5,389.7 A147,58 0 1 1 549.5,389.7 L442.7,539.8 C432,547.5 420,550.3 408,550.3 C396,550.3 383,547.5 372.8,539.3 Z M272.8,374.7 A135.4,46.5 0 1 0 543.6,374.7 A135.4,46.5 0 1 0 272.8,374.7 Z" fill="#fff" fill-opacity="0.42" fill-rule="evenodd"/>
<path d="M266.5,389.7 A147,58 0 1 1 549.5,389.7 L442.7,539.8 C432,547.5 420,550.3 408,550.3 C396,550.3 383,547.5 372.8,539.3 Z" fill="none" stroke="#2B4B66" stroke-width="1.05"/>
<ellipse cx="408.2" cy="374.7" rx="135.4" ry="46.5" fill="none" stroke="#2B4B66" stroke-width="1.05"/>
<g fill="#fff">
<path d="M353.5,385 C350.5,394 342,400 334,403.5 C329,405.5 329,411.5 334,412.2 L347,410.6 C351,409 355,408.6 359,409.8 L363,412 Z"/>
<path d="M342.5,411.6 L349.2,410.8 L351,420.2 L346,421.8 Z"/>
<ellipse cx="0" cy="0" rx="6.8" ry="16.5" transform="translate(359.8,398.5) rotate(-23.8)"/>
<ellipse cx="0" cy="0" rx="3.2" ry="11.6" fill="#E8426A" transform="translate(360.6,398.8) rotate(-23.8)"/>
</g>
<g fill="#fff">
<path d="M431,396.6 L433.4,399 L444.6,387.8 L442.2,385.4 Z"/>
<path d="M449.9,376.9 L453.9,370.7 C454.5,366 457,363 460.5,361.2 L459.4,366.7 L462.3,369.2 L465.6,367.4 L467.8,364.5 C469.5,369 468,372 466,373.5 C464,375 462.5,375.5 460.8,375.8 L452.5,379.8 Z"/>
<path d="M440.2,376.4 L443.8,373.4 L462,395.6 L458.4,398.6 Z"/>
<path d="M425.1,372.5 L428,369.5 L431,366.7 C435,362 441,360 448.1,360.5 C444,361.5 441,364.5 440.3,368 L442.4,371.4 L438,375.4 L432.5,373.5 L429.1,376.5 Z"/>
</g>
<g><circle cx="416.4" cy="482.4" r="16.9" fill="none" stroke="#fff" stroke-width="3"/><path d="M416.4,466 V475.6 M416.4,489.8 V499 M400,482.4 H409 M423.6,482.4 H433" stroke="#fff" stroke-width="3"/></g>
<path d="M391.2,550 H424.9 V593 H595 V585 L621,611 L595,637 V627.6 H391.2 Z" fill="#6DB85C"/>
<text x="457.60" y="618.00" font-size="21" fill="#FFFFFF" font-weight="normal" textLength="69.70" lengthAdjust="spacingAndGlyphs" stroke="#fff" stroke-width="0.4">RESULT</text>
<rect x="581" y="357.2" width="38" height="28.6" fill="#C8173F" />
<path d="M607.9,370.3 H618.6 V382.5 Z" fill="#8C0F2A"/>
<path d="M607.9,342 H740.7 V336 L752,356 L740.7,376 V370.5 H607.9 Z" fill="#E8436A"/>
<text x="631.30" y="364.00" font-size="15.5" fill="#FFFFFF" font-weight="normal" textLength="49.69" lengthAdjust="spacingAndGlyphs" stroke="#fff" stroke-width="0.35">ITEM 1</text>
<text x="771.60" y="352.50" font-size="17.4" fill="#7F7F7F" font-weight="normal" textLength="237.00" lengthAdjust="spacingAndGlyphs" stroke="#7F7F7F" stroke-width="0.35">The quick brown fox jumps over</text>
<text x="771.60" y="374.10" font-size="17.4" fill="#7F7F7F" font-weight="normal" textLength="93.41" lengthAdjust="spacingAndGlyphs" stroke="#7F7F7F" stroke-width="0.35">the lazy dog.</text>
<rect x="581" y="437.8" width="38" height="28.6" fill="#157A82" />
<path d="M607.9,450.90000000000003 H618.6 V463.1 Z" fill="#0E4E55"/>
<path d="M607.9,422.6 H740.7 V416.6 L752,436.6 L740.7,456.6 V451.1 H607.9 Z" fill="#1DA1AB"/>
<text x="631.30" y="444.30" font-size="15.5" fill="#FFFFFF" font-weight="normal" textLength="49.69" lengthAdjust="spacingAndGlyphs" stroke="#fff" stroke-width="0.35">ITEM 2</text>
<text x="771.60" y="432.90" font-size="17.4" fill="#7F7F7F" font-weight="normal" textLength="237.00" lengthAdjust="spacingAndGlyphs" stroke="#7F7F7F" stroke-width="0.35">The quick brown fox jumps over</text>
<text x="771.60" y="454.80" font-size="17.4" fill="#7F7F7F" font-weight="normal" textLength="93.41" lengthAdjust="spacingAndGlyphs" stroke="#7F7F7F" stroke-width="0.35">the lazy dog.</text>
<rect x="581" y="518.6" width="38" height="28.6" fill="#E3A21A" />
<path d="M607.9,531.6999999999999 H618.6 V543.9 Z" fill="#9E6B10"/>
<path d="M607.9,503.4 H740.7 V497.4 L752,517.4 L740.7,537.4 V531.9 H607.9 Z" fill="#F0BD55"/>
<text x="631.30" y="523.70" font-size="15.5" fill="#FFFFFF" font-weight="normal" textLength="49.69" lengthAdjust="spacingAndGlyphs" stroke="#fff" stroke-width="0.35">ITEM 3</text>
<text x="771.60" y="511.50" font-size="17.4" fill="#7F7F7F" font-weight="normal" textLength="237.00" lengthAdjust="spacingAndGlyphs" stroke="#7F7F7F" stroke-width="0.35">The quick brown fox jumps over</text>
<text x="771.60" y="533.70" font-size="17.4" fill="#7F7F7F" font-weight="normal" textLength="93.41" lengthAdjust="spacingAndGlyphs" stroke="#7F7F7F" stroke-width="0.35">the lazy dog.</text>
<text x="633.30" y="607.30" font-size="17.4" fill="#7F7F7F" font-weight="normal" textLength="237.10" lengthAdjust="spacingAndGlyphs" stroke="#7F7F7F" stroke-width="0.35">The quick brown fox jumps over</text>
<text x="633.30" y="628.80" font-size="17.4" fill="#7F7F7F" font-weight="normal" textLength="93.41" lengthAdjust="spacingAndGlyphs" stroke="#7F7F7F" stroke-width="0.35">the lazy dog.</text>
<path d="M1000.4,625.5 L1020.5,608.4 L1040.4,625.5" fill="none" stroke="#A6A6A6" stroke-width="3.2" stroke-linecap="round" stroke-linejoin="round"/>
<path d="M1005.3,626.9 L1020.8,614.3 L1037,626.9 L1035.4,646.6 H1025.3 V631.7 H1016.9 V646.6 H1006.9 Z" fill="#A6A6A6"/>
</g></g>
<path d="M266.5,389.7 A147,58 0 1 1 549.5,389.7 L442.7,539.8 C432,547.5 420,550.3 408,550.3 C396,550.3 383,547.5 372.8,539.3 Z" fill="none" stroke="#2B4B66" stroke-width="0.75" vector-effect="non-scaling-stroke"/><ellipse cx="408.2" cy="374.7" rx="135.4" ry="46.5" fill="none" stroke="#2B4B66" stroke-width="0.6" vector-effect="non-scaling-stroke"/>
</g>
<text x="5.80" y="387.00" font-size="15" fill="#444444" font-weight="normal" textLength="14.70" lengthAdjust="spacingAndGlyphs" >11</text>
<rect x="36.0" y="376.8" width="103.5" height="59.5" fill="#A9D18E" stroke="#C6C6C6" stroke-width="1"/>
<line x1="60" y1="382.5" x2="87" y2="382.5" stroke="#444" stroke-width="1.6" />
<line x1="56" y1="386.5" x2="93" y2="386.5" stroke="#5a7a4a" stroke-width="0.6" />
<rect x="110" y="379.2" width="24.7" height="53.8" fill="#595959" />
<line x1="111" y1="383" x2="134" y2="383" stroke="#777" stroke-width="0.5" />
<line x1="111" y1="389" x2="134" y2="389" stroke="#777" stroke-width="0.5" />
<line x1="111" y1="395" x2="134" y2="395" stroke="#777" stroke-width="0.5" />
<line x1="111" y1="401" x2="134" y2="401" stroke="#777" stroke-width="0.5" />
<line x1="111" y1="407" x2="134" y2="407" stroke="#777" stroke-width="0.5" />
<line x1="111" y1="413" x2="134" y2="413" stroke="#777" stroke-width="0.5" />
<line x1="111" y1="419" x2="134" y2="419" stroke="#777" stroke-width="0.5" />
<line x1="111" y1="425" x2="134" y2="425" stroke="#777" stroke-width="0.5" />
<rect x="111" y="406" width="23" height="11" fill="#A0463A" />
<line x1="111" y1="408.5" x2="134" y2="408.5" stroke="#7a3a30" stroke-width="0.5" />
<line x1="111" y1="411.5" x2="134" y2="411.5" stroke="#7a3a30" stroke-width="0.5" />
<line x1="111" y1="414.5" x2="134" y2="414.5" stroke="#7a3a30" stroke-width="0.5" />
<rect x="125" y="417" width="9" height="9" fill="#ddd" />
<line x1="53" y1="394" x2="85" y2="394" stroke="#4a5a40" stroke-width="0.5" />
<line x1="53" y1="397" x2="83" y2="397" stroke="#4a5a40" stroke-width="0.5" />
<line x1="53" y1="405" x2="88" y2="405" stroke="#4a5a40" stroke-width="0.5" />
<line x1="53" y1="408" x2="85" y2="408" stroke="#4a5a40" stroke-width="0.5" />
<line x1="53" y1="414" x2="93" y2="414" stroke="#4a5a40" stroke-width="0.5" />
<line x1="53" y1="417" x2="89" y2="417" stroke="#4a5a40" stroke-width="0.5" />
<line x1="53" y1="423" x2="81" y2="423" stroke="#4a5a40" stroke-width="0.5" />
<rect x="53" y="399" width="38" height="3" fill="#bbb" />
<path d="M57,400 C70,404 80,402 92,398" fill="none" stroke="#2B9BD8" stroke-width="0.8" />
<path d="M86,412 L110,410 M90,418 L110,417" fill="none" stroke="#2B9BD8" stroke-width="0.8" />
<line x1="54" y1="428" x2="86" y2="428" stroke="#2B7CD3" stroke-width="0.7" />
<line x1="54" y1="430.5" x2="84" y2="430.5" stroke="#2B7CD3" stroke-width="0.7" />
<text x="5.80" y="465.90" font-size="15" fill="#444444" font-weight="normal" textLength="15.10" lengthAdjust="spacingAndGlyphs" >12</text>
<rect x="36.0" y="455.6" width="103.5" height="59.4" fill="#C9E8F8" stroke="#C6C6C6" stroke-width="1"/>
<line x1="52" y1="461.8" x2="118.7" y2="461.8" stroke="#555" stroke-width="1.8" />
<path d="M43,477.5 L50.5,474 L58,477.5 V485.5 L50.5,489 L43,485.5 Z" fill="#6a6a6a" stroke="none" stroke-width="1" />
<path d="M43,477.5 L50.5,481 L58,477.5 M50.5,481 V489" fill="none" stroke="#C9E8F8" stroke-width="0.6" />
<line x1="63" y1="469" x2="80" y2="469" stroke="#555" stroke-width="0.5" />
<line x1="63" y1="472" x2="80" y2="472" stroke="#555" stroke-width="0.5" />
<line x1="63" y1="478" x2="80" y2="478" stroke="#555" stroke-width="0.5" />
<line x1="63" y1="481" x2="80" y2="481" stroke="#555" stroke-width="0.5" />
<line x1="63" y1="487" x2="80" y2="487" stroke="#555" stroke-width="0.5" />
<line x1="63" y1="490" x2="80" y2="490" stroke="#555" stroke-width="0.5" />
<line x1="63" y1="493" x2="80" y2="493" stroke="#555" stroke-width="0.5" />
<line x1="92" y1="474" x2="118" y2="474" stroke="#2B7CD3" stroke-width="0.5" />
<line x1="92" y1="477" x2="118" y2="477" stroke="#2B7CD3" stroke-width="0.5" />
<line x1="92" y1="480" x2="118" y2="480" stroke="#2B7CD3" stroke-width="0.5" />
<line x1="43" y1="504" x2="63" y2="504" stroke="#2B7CD3" stroke-width="0.5" />
<line x1="43" y1="507" x2="63" y2="507" stroke="#2B7CD3" stroke-width="0.5" />
<line x1="43" y1="510" x2="63" y2="510" stroke="#2B7CD3" stroke-width="0.5" />
<text x="5.80" y="545.30" font-size="15" fill="#444444" font-weight="normal" textLength="15.10" lengthAdjust="spacingAndGlyphs" >13</text>
<rect x="36.0" y="535" width="103.5" height="59.5" fill="#C5E5F8" stroke="#C6C6C6" stroke-width="1"/>
<line x1="52.7" y1="540.5" x2="117.7" y2="540.5" stroke="#6a6a6a" stroke-width="1.1" />
<path d="M42.5,554.7 H48 L55,575 H83 M51,565.5 H79.5" fill="none" stroke="#555" stroke-width="3.2" />
<circle cx="52.7" cy="581.8" r="3.8" fill="#555"/><circle cx="81.6" cy="581.8" r="3.8" fill="#555"/>
<circle cx="78.2" cy="558.9" r="9.2" fill="#555"/>
<path d="M73.5,558.5 L77,562.5 L83,555" fill="none" stroke="#C5E5F8" stroke-width="2.2" />
<path d="M44,546.5 L48.5,551 M48.5,546.5 L44,551" fill="none" stroke="#444" stroke-width="0.9" />
<path d="M50,548 L55.5,554" fill="none" stroke="#E8436A" stroke-width="1" />
<line x1="56" y1="544.5" x2="66" y2="544.5" stroke="#777" stroke-width="0.6" />
<line x1="56" y1="547" x2="66" y2="547" stroke="#777" stroke-width="0.6" />
<line x1="56" y1="549.5" x2="66" y2="549.5" stroke="#777" stroke-width="0.6" />
<line x1="56" y1="552" x2="66" y2="552" stroke="#777" stroke-width="0.6" />
<line x1="95.5" y1="545.4" x2="123.4" y2="545.4" stroke="#888" stroke-width="0.6" />
<rect x="94.5" y="549.3" width="31.5" height="42" fill="#ECECEC" />
<rect x="94.5" y="549.3" width="31.5" height="10" fill="#5f5f5f" />
<rect x="94.5" y="585" width="31.5" height="6.3" fill="#3f3f3f" />
<path d="M97,563 H100 L103,571 H116 M102,567.5 H115" fill="none" stroke="#666" stroke-width="2" />
<circle cx="115" cy="563.5" r="4.2" fill="#666"/>
<circle cx="104" cy="574.5" r="1.6" fill="#666"/><circle cx="114" cy="574.5" r="1.6" fill="#666"/>
<rect x="100" y="572" width="8" height="12" fill="#fff" stroke="#ccc" stroke-width="0.5"/>
<text x="5.80" y="624.40" font-size="15" fill="#444444" font-weight="normal" textLength="15.10" lengthAdjust="spacingAndGlyphs" >14</text>
<rect x="36.0" y="614" width="103.5" height="60" fill="#C5E5F8" stroke="#C6C6C6" stroke-width="1"/>
<rect x="43.1" y="621" width="24" height="41" fill="#5a5a5a" />
<rect x="46" y="634" width="21" height="28" fill="#ECECEC" />
<rect x="50" y="640" width="12" height="22" fill="#fff" />
<path d="M60,648 L65,646 L66,653 L61,655 Z" fill="#E0306A" stroke="none" stroke-width="1" />
<path d="M58,648 L63,645 L63,650 Z" fill="#2B7CD3" stroke="none" stroke-width="1" />
<rect x="106.1" y="624.8" width="29.5" height="38" fill="#5f5f5f" />
<rect x="108" y="631" width="27" height="31" fill="#DADADA" />
<rect x="110" y="634" width="13" height="28" fill="#fff" />
<rect x="113" y="637" width="3" height="3" fill="#555" />
<rect x="118" y="637" width="3" height="3" fill="#555" />
<rect x="113" y="642" width="3" height="3" fill="#555" />
<rect x="118" y="642" width="3" height="3" fill="#555" />
<rect x="113" y="647" width="3" height="3" fill="#555" />
<rect x="126" y="648" width="5" height="5" fill="#7DBF5A" />
<rect x="126" y="655" width="5" height="5" fill="#E8A33D" />
<path d="M72.4,630.2 L53.1,651.4" fill="none" stroke="#E8436A" stroke-width="1" />
<path d="M105.1,651.4 L116.7,663" fill="none" stroke="#E8436A" stroke-width="1" />
<line x1="73" y1="626.5" x2="95" y2="626.5" stroke="#666" stroke-width="0.5" />
<line x1="73" y1="629" x2="95" y2="629" stroke="#666" stroke-width="0.5" />
<line x1="73" y1="631.5" x2="95" y2="631.5" stroke="#666" stroke-width="0.5" />
<line x1="78" y1="648.5" x2="103" y2="648.5" stroke="#666" stroke-width="0.5" />
<line x1="78" y1="651" x2="103" y2="651" stroke="#666" stroke-width="0.5" />
<line x1="78" y1="653.5" x2="103" y2="653.5" stroke="#666" stroke-width="0.5" />
</g>
<text x="9.00" y="676.30" font-size="11.5" fill="#4a4a4a" font-weight="normal" textLength="68.80" lengthAdjust="spacingAndGlyphs" >Slide 10 of 21</text>
<text x="110.00" y="676.30" font-size="11.5" fill="#4a4a4a" font-weight="normal" textLength="114.60" lengthAdjust="spacingAndGlyphs" >English (United States)</text>
<path d="M683,671 H697.5 M683,674.5 H697.5 M683,678 H697.5 M687,667.5 L690,670.3 L693,667.5" fill="none" stroke="#555" stroke-width="0.9" />
<text x="700.00" y="676.30" font-size="11.5" fill="#4a4a4a" font-weight="normal" textLength="29.70" lengthAdjust="spacingAndGlyphs" >Notes</text>
<rect x="749" y="663" width="39.4" height="21" fill="#C8C8C8" />
<rect x="762.5" y="667.5" width="13.5" height="11" fill="none" stroke="#444" stroke-width="1.1"/>
<rect x="766" y="670.5" width="8" height="5" fill="none" stroke="#444" stroke-width="1"/>
<rect x="802.5" y="667.5" width="5.5" height="5" fill="none" stroke="#444" stroke-width="1"/>
<rect x="810" y="667.5" width="5.5" height="5" fill="none" stroke="#444" stroke-width="1"/>
<rect x="802.5" y="674" width="5.5" height="5" fill="none" stroke="#444" stroke-width="1"/>
<rect x="810" y="674" width="5.5" height="5" fill="none" stroke="#444" stroke-width="1"/>
<path d="M842,668.5 H848.5 V679 H842 Z M848.5,668.5 H855 V679 H848.5 M843.5,671 H847 M843.5,673.5 H847 M843.5,676 H847 M850,671 H853.5 M850,673.5 H853.5 M850,676 H853.5" fill="none" stroke="#444" stroke-width="0.9" />
<path d="M881.5,667.5 H894.5 M883,667.5 V673.5 H893 V667.5 M888,673.5 V678.5 M884.5,678.5 H891.5" fill="none" stroke="#444" stroke-width="1" />
<line x1="915" y1="673.3" x2="921.7" y2="673.3" stroke="#555" stroke-width="1" />
<line x1="928.7" y1="673.5" x2="1027" y2="673.5" stroke="#A0A0A0" stroke-width="1" />
<line x1="978.5" y1="670.5" x2="978.5" y2="676.5" stroke="#A0A0A0" stroke-width="1" />
<rect x="969" y="668" width="4.8" height="10" fill="#5a5a5a" />
<path d="M1032.4,673.3 H1040.6 M1036.5,669.2 V677.4" fill="none" stroke="#555" stroke-width="1" />
<text x="1053.80" y="676.30" font-size="11.5" fill="#4a4a4a" font-weight="normal" textLength="21.20" lengthAdjust="spacingAndGlyphs" >87%</text>
<rect x="1090.5" y="669" width="7.5" height="8" fill="none" stroke="#444" stroke-width="1.1"/>
<path d="M1089,670.5 L1086.7,673 L1089,675.5 M1099.5,670.5 L1101.8,673 L1099.5,675.5 M1092,667 L1094.3,665 L1096.6,667 M1092,679 L1094.3,681 L1096.6,679" fill="none" stroke="#444" stroke-width="0.9" />
</svg></body></html>
